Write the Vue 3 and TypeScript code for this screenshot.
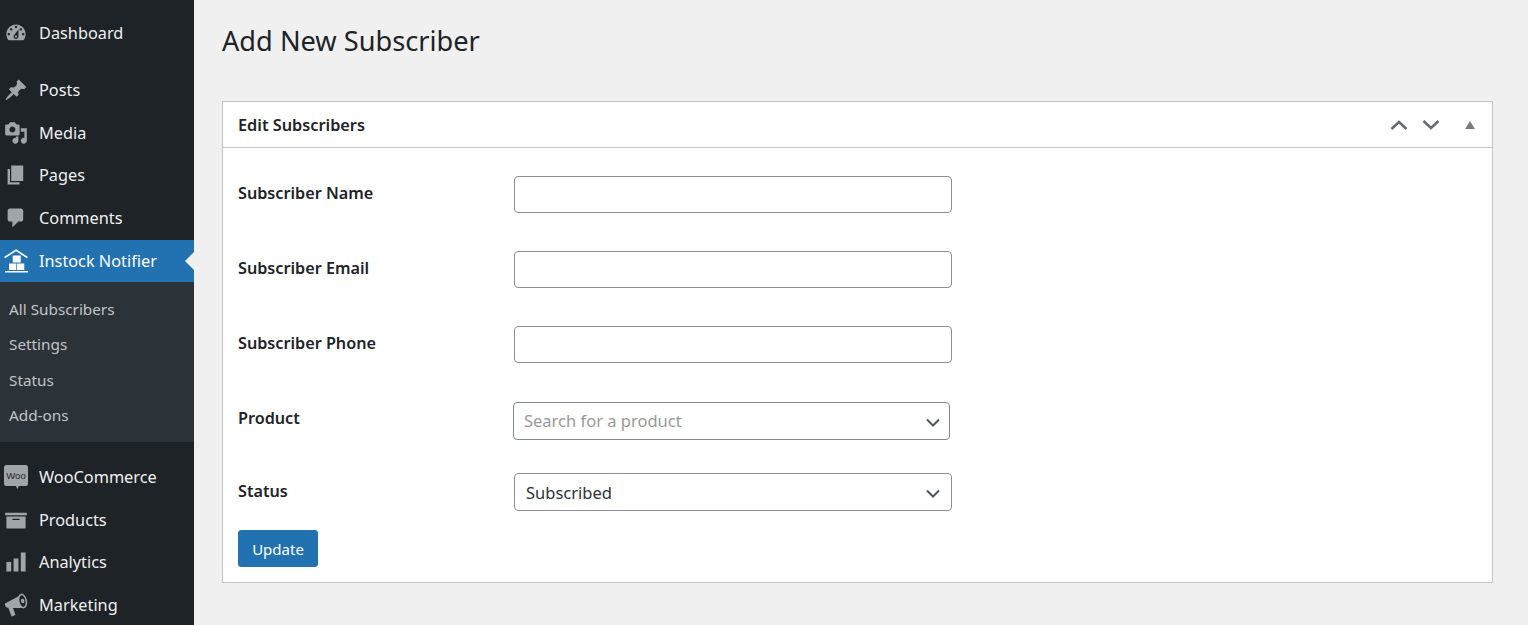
<script setup lang="ts">
const fields = ['Name', 'Email', 'Phone'];
const subs = ['All Subscribers', 'Settings', 'Status', 'Add-ons'];
</script>

<template>
  <div class="page">
    <aside class="side">
      <nav class="menu first">
        <a class="item"><svg class="ic" viewBox="0 0 20 20"><path d="M3.76 16h12.48c1.1-1.37 1.76-3.11 1.76-5 0-4.42-3.58-8-8-8s-8 3.58-8 8c0 1.89.66 3.63 1.76 5zM10 4c.55 0 1 .45 1 1s-.45 1-1 1-1-.45-1-1 .45-1 1-1zM6 6c.55 0 1 .45 1 1s-.45 1-1 1-1-.45-1-1 .45-1 1-1zm8 0c.55 0 1 .45 1 1s-.45 1-1 1-1-.45-1-1 .45-1 1-1zm-5.37 5.55L12 7v6c0 1.1-.9 2-2 2s-2-.9-2-2c0-.57.24-1.08.63-1.45zM4 10c.55 0 1 .45 1 1s-.45 1-1 1-1-.45-1-1 .45-1 1-1zm12 0c.55 0 1 .45 1 1s-.45 1-1 1-1-.45-1-1 .45-1 1-1zm-5 3c0-.55-.45-1-1-1s-1 .45-1 1 .45 1 1 1 1-.45 1-1z"/></svg>Dashboard</a>
      </nav>
      <nav class="menu second">
        <a class="item"><svg class="ic" viewBox="0 0 20 20"><path d="M10.44 3.02l1.82-1.82 6.36 6.35-1.83 1.82c-1.05-.68-2.48-.57-3.41.36l-.75.75c-.92.93-1.04 2.35-.35 3.41l-1.83 1.82-2.41-2.41-2.8 2.79c-.42.42-3.38 2.71-3.8 2.29s1.86-3.39 2.28-3.81l2.79-2.79L4.1 9.36l1.83-1.82c1.05.69 2.48.57 3.4-.36l.75-.75c.93-.92 1.05-2.35.36-3.41z"/></svg>Posts</a>
        <a class="item"><svg class="ic" viewBox="0 0 20 20"><path d="M13 11V4c0-.55-.45-1-1-1h-1.67L9 1H5L3.67 3H2c-.55 0-1 .45-1 1v7c0 .55.45 1 1 1h10c.55 0 1-.45 1-1zM7 4.5c1.38 0 2.5 1.12 2.5 2.5S8.38 9.5 7 9.5 4.5 8.38 4.5 7 5.62 4.5 7 4.5zM14 6h5v10.5c0 1.38-1.12 2.5-2.5 2.5S14 17.88 14 16.5s1.12-2.5 2.5-2.5c.17 0 .34.02.5.05V9h-3V6zm-4 8.05V13h2v3.5c0 1.38-1.12 2.5-2.5 2.5S7 17.88 7 16.5 8.12 14 9.5 14c.17 0 .34.02.5.05z"/></svg>Media</a>
        <a class="item"><svg class="ic" viewBox="0 0 20 20"><path d="M6 15V2h10v13H6zm-1 1h8v2H3V5h2v11z"/></svg>Pages</a>
        <a class="item"><svg class="ic" viewBox="0 0 20 20"><path d="M5 2h9c1.1 0 2 .9 2 2v7c0 1.1-.9 2-2 2h-2l-5 5v-5H5c-1.1 0-2-.9-2-2V4c0-1.1.9-2 2-2z"/></svg>Comments</a>
        <a class="item active">
          <svg class="ic" viewBox="0 0 24 24"><path d="M12 0.200 23.800 7.800 23 9.200 12 2.200 1 9.200 0.200 7.800z"/><path d="M8.700 6.500h8v7h-8zM5 14.500h7.300v6.500H5zM13 14.500h7.300v6.500H13zM1 22h23v1.400H1z"/></svg>
          Instock Notifier
        </a>
      </nav>
      <ul class="sub">
        <li v-for="s in subs" :key="s">{{ s }}</li>
      </ul>
      <nav class="menu third">
        <a class="item">
          <svg class="ic" viewBox="0 0 24 24"><path d="M2.500 0h19A2.500 2.500 0 0 1 24 2.500v16a2.500 2.500 0 0 1-2.500 2.500H15l-1.800 3-1.200-3H2.500A2.500 2.500 0 0 1 0 18.500v-16A2.500 2.500 0 0 1 2.500 0z"/><text x="12" y="14" text-anchor="middle" class="woo">Woo</text></svg>
          WooCommerce
        </a>
        <a class="item"><svg class="ic" viewBox="0 0 20 20"><path d="M19 4v2H1V4h18zM2 7h16v10H2V7zm11 3V9H7v1h6z"/></svg>Products</a>
        <a class="item"><svg class="ic" viewBox="0 0 20 20"><path d="M18 18V2h-4v16h4zm-6 0V7H8v11h4zm-6 0v-8H2v8h4z"/></svg>Analytics</a>
        <a class="item">
          <svg class="ic" viewBox="0 0 24 24">
            <path d="M1 10.500 16 2.500 18 15 9 15 11.500 22 7.500 23.500 4.300 14.800C2.500 14.800 1 13.500 1 11.800z"/>
            <ellipse cx="18.500" cy="8" rx="4.500" ry="7.500" transform="rotate(-12 18.500 8)"/>
            <ellipse cx="18.500" cy="8" rx="3" ry="5.800" transform="rotate(-12 18.500 8)" fill="#1d2327"/>
            <ellipse cx="18.700" cy="8" rx="1.700" ry="2.200" transform="rotate(-12 18.700 8)"/>
          </svg>
          Marketing
        </a>
      </nav>
    </aside>

    <main class="main">
      <h1 class="title">Add New Subscriber</h1>
      <section class="box">
        <header class="head">
          <h2>Edit Subscribers</h2>
          <div class="tools">
            <svg width="18" height="12" viewBox="0 0 18 12"><path d="M1.500 10 9 3l7.500 7" /></svg>
            <svg width="18" height="12" viewBox="0 0 18 12"><path d="M1.500 2 9 9l7.500-7" /></svg>
            <span class="tri"></span>
          </div>
        </header>
        <form class="body" @submit.prevent>
          <div v-for="f in fields" :key="f" class="row">
            <label>Subscriber {{ f }}</label>
            <input class="ctl" type="text" />
          </div>
          <div class="row product">
            <label>Product</label>
            <div class="ctl sel placeholder">
              Search for a product
              <svg class="chev" width="14" height="9" viewBox="0 0 14 9"><path d="M1 1.500 7 7.500l6-6" /></svg>
            </div>
          </div>
          <div class="row status">
            <label>Status</label>
            <div class="ctl sel">
              Subscribed
              <svg class="chev" width="14" height="9" viewBox="0 0 14 9"><path d="M1 1.500 7 7.500l6-6" /></svg>
            </div>
          </div>
          <button class="btn" type="submit">Update</button>
        </form>
      </section>
    </main>
  </div>
</template>

<style>
html, body { margin: 0; background: #f0f0f1; overflow: hidden; }
</style>

<style scoped>
.page {
  display: flex;
  height: 625px;
  overflow: hidden;
  font-family: "Noto Sans", "Open Sans", sans-serif;
  color: #1d2327;
  background: #f0f0f1;
}
.side {
  flex: 0 0 194px;
  background: #1d2327;
  padding-top: 12px;
  overflow: hidden;
}
.menu { display: flex; flex-direction: column; }
.second { margin-top: 14.800px; }
.third { margin-top: 14px; }
.item {
  position: relative;
  display: flex;
  align-items: center;
  box-sizing: border-box;
  height: 42.600px;
  padding-bottom: 1px;
  flex: none;
  gap: 11px;
  padding-left: 4px;
  font-size: 16.300px;
  color: #f0f0f1;
}
.ic { width: 24px; height: 24px; flex: none; fill: #a0a5aa; }
.woo { font: 400 9.500px "Liberation Sans", sans-serif; fill: #1d2327; }
.active { background: #2271b1; color: #fff; }
.active .ic { fill: #fff; }
.active::after {
  content: "";
  position: absolute;
  right: 0;
  top: 12px;
  border: 9.500px solid transparent;
  border-right-color: #f0f0f1;
  border-left-width: 0;
}
.sub {
  list-style: none;
  margin: 0;
  padding: 9.700px 0 0;
  height: 160px;
  box-sizing: border-box;
  background: #2c3338;
  color: #c3c4c7;
  font-size: 15.300px;
}
.sub li {
  height: 35.300px;
  line-height: 35.300px;
  padding-left: 9px;
}
.main { flex: 1; min-width: 0; padding: 0 35px 0 28px; }
.title {
  margin: 0;
  padding-top: 21px;
  height: 101px;
  box-sizing: border-box;
  font-size: 27.200px;
  line-height: 40px;
  font-weight: 400;
}
.box {
  background: #fff;
  border: 1px solid #c3c4c7;
}
.head {
  display: flex;
  align-items: center;
  justify-content: space-between;
  height: 45px;
  padding: 0 17px 0 15px;
  border-bottom: 1px solid #c3c4c7;
}
.head h2 { margin: 0; font-size: 16.300px; font-weight: 600; }
.tools { display: flex; align-items: center; gap: 14px; }
.tools svg path { fill: none; stroke: #646970; stroke-width: 2.400; }
.tri {
  margin-left: 11px;
  border: 5.500px solid transparent;
  border-top: 0;
  border-bottom: 8px solid #787c82;
}
.body { padding: 28px 15px 15px; }
.row { display: flex; align-items: flex-start; margin-bottom: 38px; }
.row label {
  flex: 0 0 276px;
  font-size: 16.200px;
  font-weight: 600;
  line-height: 22px;
  padding-top: 6px;
}
.ctl {
  box-sizing: border-box;
  width: 438px;
  height: 37px;
  margin: 0;
  background: #fff;
  border: 1px solid #8c8f94;
  border-radius: 4px;
  outline: none;
}
.sel {
  position: relative;
  display: flex;
  align-items: center;
  padding-left: 11px;
  height: 38px;
  font-size: 16.500px;
  color: #2c3338;
}
.product { margin-top: 39px; margin-bottom: 33px; }
.product .ctl { width: 437px; margin-left: -1px; border-color: #7e8993; color: #999; padding: 0 0 2px 10px; }
.product label { padding-top: 5px; }
.product .chev { right: 9px; }
.status { margin-bottom: 19px; }
.status label { padding-top: 7px; }
.chev { position: absolute; right: 11px; top: 15px; }
.chev path { fill: none; stroke: #50575e; stroke-width: 2; }
.btn {
  display: block;
  width: 80px;
  height: 37px;
  padding: 0;
  background: #2271b1;
  border: 1px solid #2271b1;
  border-radius: 3px;
  color: #fff;
  font: 400 15px "Noto Sans", sans-serif;
}
</style>
